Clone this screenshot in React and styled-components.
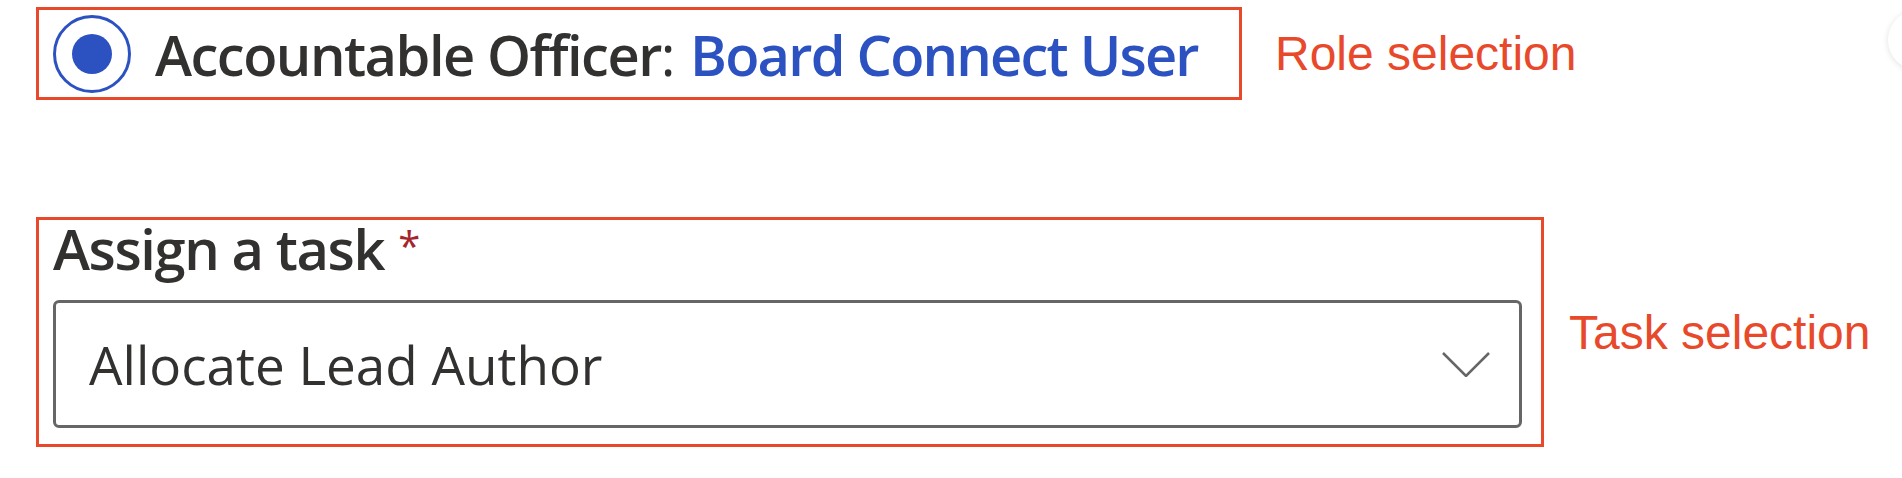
import React from 'react';
import styled, { createGlobalStyle } from 'styled-components';

const GlobalStyle = createGlobalStyle`
  body {
    margin: 0;
    background: #fff;
    font-family: "Open Sans", "Noto Sans", sans-serif;
  }
`;

const Page = styled.div`
  position: relative;
  width: 1902px;
  height: 478px;
  overflow: hidden;
  padding: 7px 0 0 36px;
  box-sizing: border-box;
`;

const Row = styled.div`
  display: flex;
  align-items: center;
  margin-bottom: ${(p) => p.$gap || 0}px;
`;

const Frame = styled.div`
  box-sizing: border-box;
  flex-shrink: 0;
  width: ${(p) => p.$w}px;
  height: ${(p) => p.$h}px;
  border: 3px solid #e8492b;
`;

const RoleFrame = styled(Frame)`
  display: flex;
  align-items: center;
  padding-left: 14px;
`;

const Radio = styled.div`
  box-sizing: border-box;
  flex-shrink: 0;
  width: 78px;
  height: 78px;
  border-radius: 50%;
  border: 3px solid #2c52c1;
  display: flex;
  align-items: center;
  justify-content: center;
  margin-right: 24px;

  &::after {
    content: '';
    width: 40px;
    height: 40px;
    border-radius: 50%;
    background: #2c52c1;
  }
`;

const RoleText = styled.div`
  font-size: 56px;
  font-weight: 600;
  letter-spacing: -1.5px;
  color: #323130;
  white-space: nowrap;
  line-height: 1;
`;

const Colon = styled.span`
  font-weight: 400;
  margin-right: 16px;
`;

const Link = styled.span`
  color: #2c52c1;
  letter-spacing: -1.8px;
`;

const Note = styled.div`
  font-family: "Liberation Sans", Arial, sans-serif;
  font-size: 48px;
  color: #e8492b;
  margin-left: ${(p) => p.$gap}px;
  white-space: nowrap;
`;

const TaskFrame = styled(Frame)`
  display: flex;
  flex-direction: column;
  padding: 0 19px 0 14px;
`;

const Label = styled.div`
  font-size: 56px;
  font-weight: 600;
  letter-spacing: -1.4px;
  color: #323130;
  line-height: 1;
  height: 80px;
  white-space: nowrap;
`;

const Required = styled.span`
  display: inline-block;
  vertical-align: top;
  font-size: 40px;
  font-weight: 400;
  color: #a4262c;
  margin: 6px 0 0 14px;
`;

const Select = styled.div`
  box-sizing: border-box;
  height: 128px;
  border: 3px solid #666;
  border-radius: 6px;
  display: flex;
  align-items: center;
  justify-content: space-between;
  padding: 0 29px 0 33px;
  font-size: 53px;
  color: #323130;
`;

const Bubble = styled.div`
  position: absolute;
  left: 1888px;
  top: 10px;
  width: 60px;
  height: 60px;
  border-radius: 50%;
  background: #fff;
  box-shadow: 0 1px 6px rgba(0, 0, 0, 0.12);
`;

function Chevron() {
  return (
    <svg width="48" height="25" viewBox="0 0 48 25">
      <polyline points="1,1 24,24 47,1" fill="none" stroke="#666" strokeWidth="2.5" />
    </svg>
  );
}

export default function App() {
  return (
    <>
      <GlobalStyle />
      <Page>
        <Row $gap={117}>
          <RoleFrame $w={1206} $h={93}>
            <Radio />
            <RoleText>
              Accountable Officer<Colon>:</Colon>
              <Link>Board Connect User</Link>
            </RoleText>
          </RoleFrame>
          <Note $gap={33}>Role selection</Note>
        </Row>
        <Row>
          <TaskFrame $w={1508} $h={230}>
            <Label>
              Assign a task<Required>*</Required>
            </Label>
            <Select>
              <span>Allocate Lead Author</span>
              <Chevron />
            </Select>
          </TaskFrame>
          <Note $gap={25}>Task selection</Note>
        </Row>
        <Bubble />
      </Page>
    </>
  );
}
